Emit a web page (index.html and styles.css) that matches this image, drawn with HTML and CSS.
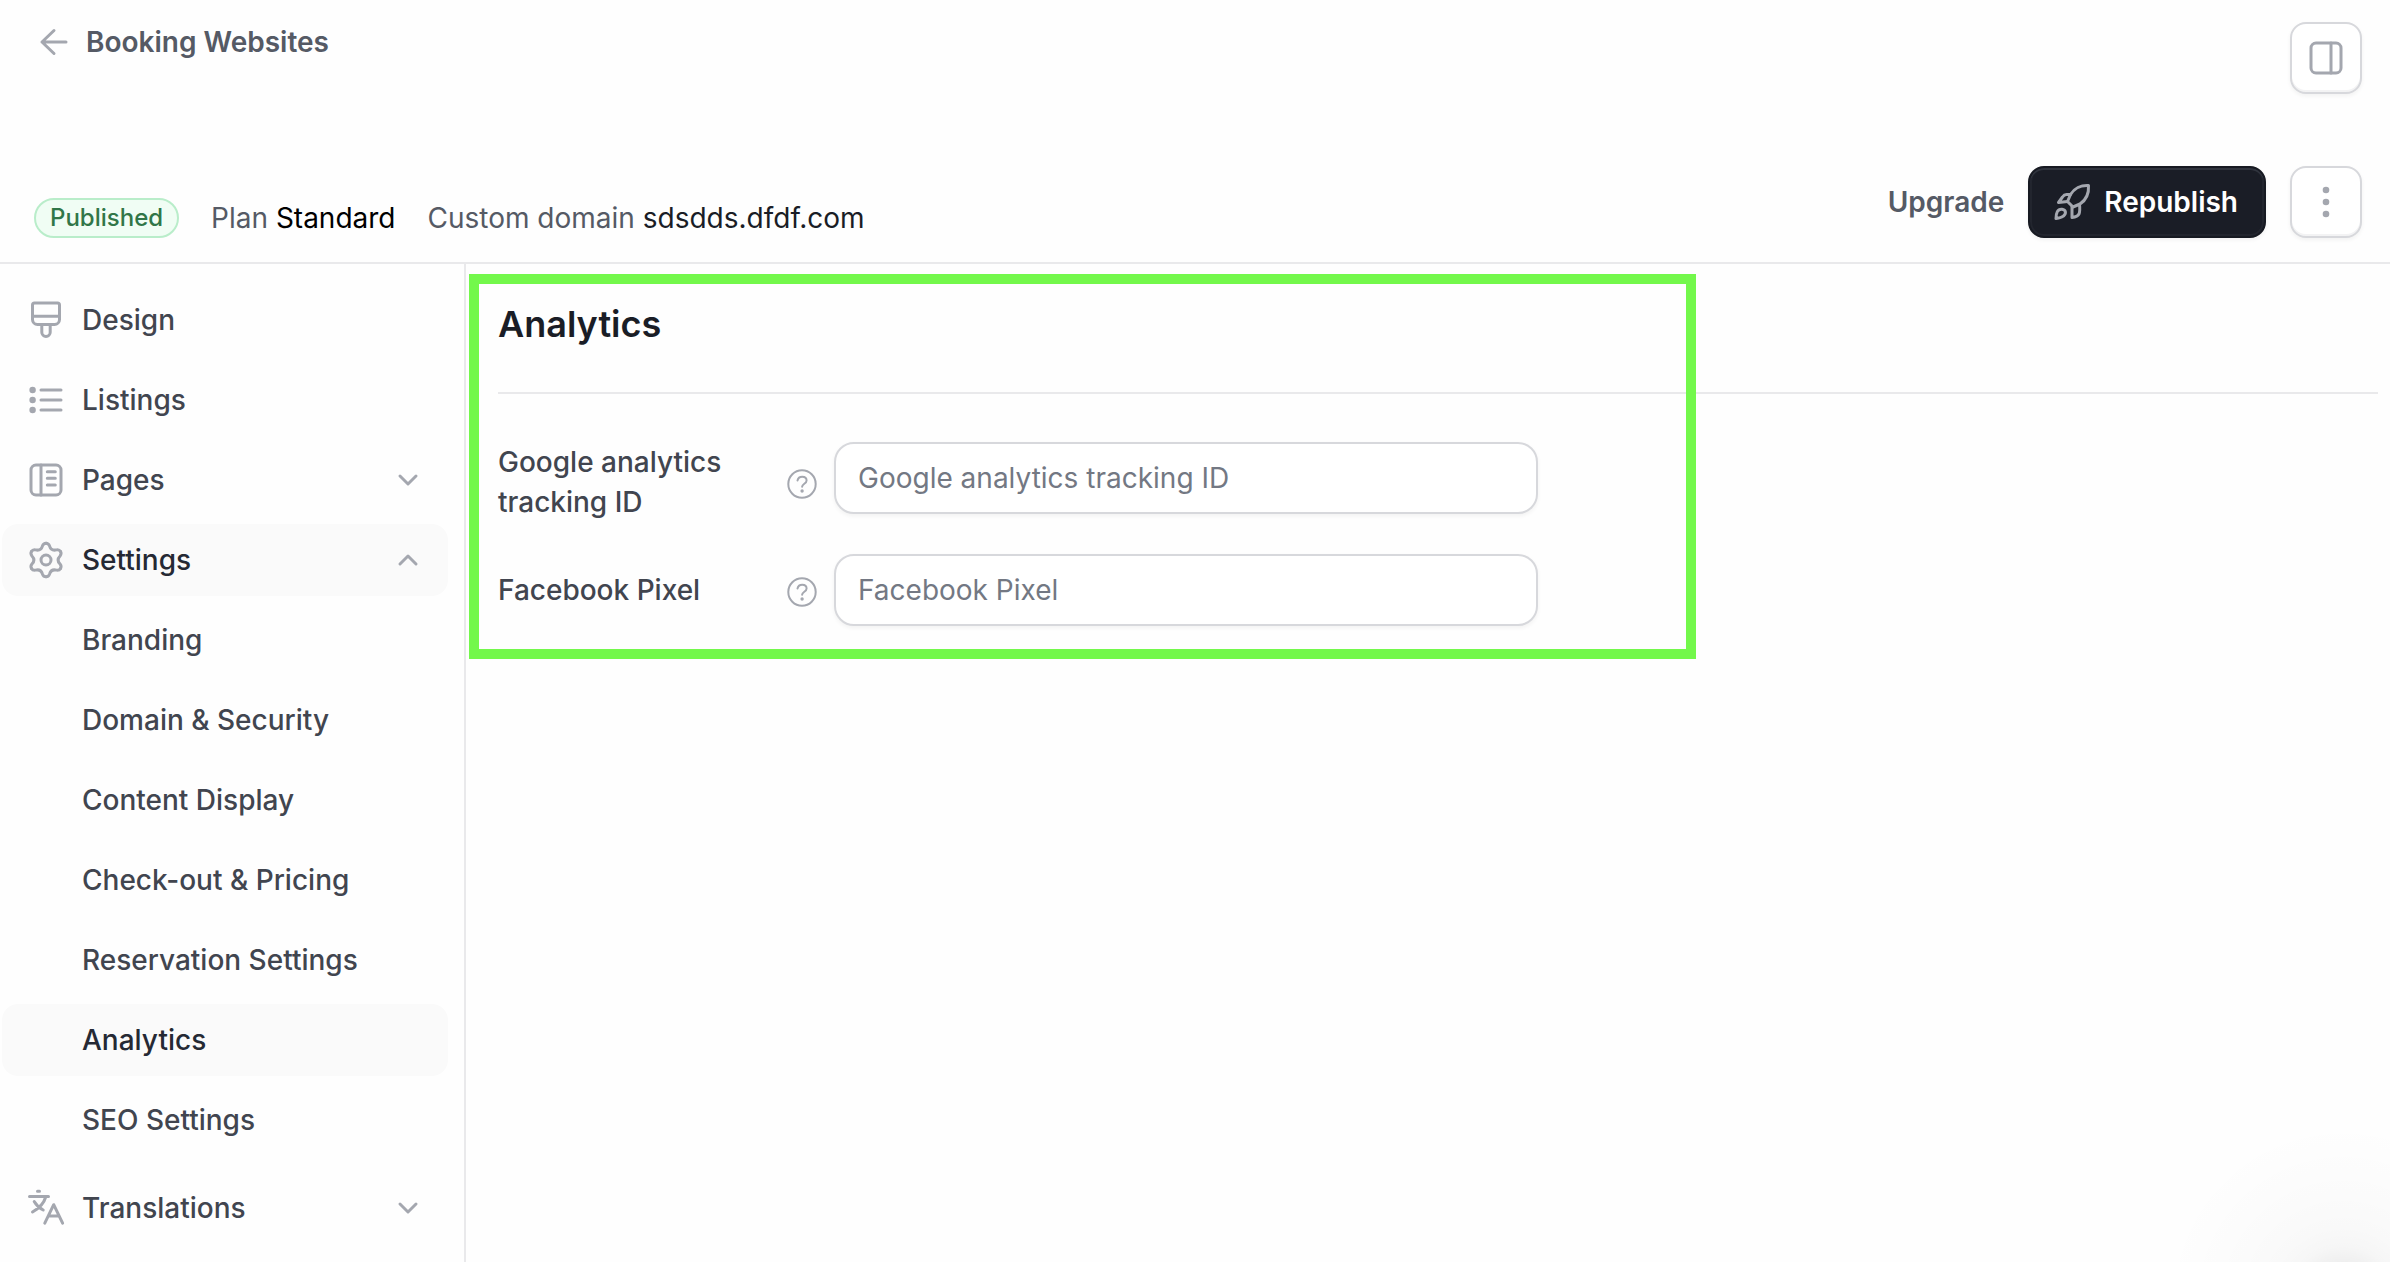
FILE: index.html
```html
<!DOCTYPE html>
<html lang="en">
<head>
<meta charset="utf-8">
<meta name="viewport" content="width=device-width, initial-scale=1">
<title>Analytics – Booking Websites</title>
<link rel="stylesheet" href="styles.css">
</head>
<body>
<header class="header">
  <div class="header-row">
    <a class="back" href="#">
      <svg class="icon-back" viewBox="0 0 32 32" aria-hidden="true"><path d="M28 16H4M16 4.500 4 16l12 11.500"/></svg>
      Booking Websites
    </a>
    <button class="icon-button" type="button" aria-label="Toggle panel">
      <svg class="icon" viewBox="0 0 40 40" aria-hidden="true"><rect x="5" y="5" width="30" height="30" rx="5"/><path d="M25 5v30"/></svg>
    </button>
  </div>
  <div class="header-row">
    <div class="status">
      <span class="badge">Published</span>
      <span>Plan <span class="plan">Standard</span></span>
      <span>Custom domain <span class="domain">sdsdds.dfdf.com</span></span>
    </div>
    <div class="actions">
      <button class="text-button" type="button">Upgrade</button>
      <button class="primary-button" type="button">
        <svg class="icon" viewBox="0 0 40 40" aria-hidden="true">
          <path d="M36.500 3.500C29 3 22 6.500 18.500 12.500L15.500 19.500 21 25l7-3C34 18 37 11 36.500 3.500Z"/>
          <path d="M18.500 12.500h-4c-2 0-3 1-4 2.500L6.500 20.500l9-1"/>
          <path d="M20 24.500V35.500c3.500-.5 6-1.500 7-3.500.8-2 1-5 .5-9.500"/>
          <path d="M4 36.500C4 31 5.500 26.800 10 27.200c4 .4 4.500 4.300 1.500 6.800-2 1.800-4.500 2.200-7.500 2.500Z"/>
        </svg>
        Republish
      </button>
      <button class="icon-button" type="button" aria-label="More actions">
        <svg class="icon" viewBox="0 0 40 40" aria-hidden="true"><g class="dots"><circle cx="20" cy="8" r="3.300"/><circle cx="20" cy="20" r="3.300"/><circle cx="20" cy="32" r="3.300"/></g></svg>
      </button>
    </div>
  </div>
</header>
<div class="layout">
  <nav class="sidebar" aria-label="Website">
    <a class="nav-item" href="#">
      <svg class="icon" viewBox="0 0 40 40" aria-hidden="true"><path d="M8.500 3h23a2 2 0 0 1 2 2v14.500a5 5 0 0 1-5 5h-17a5 5 0 0 1-5-5V5a2 2 0 0 1 2-2ZM6.500 16.300h27M15.800 24.500v7.800a4.200 4.200 0 0 0 8.400 0v-7.800"/></svg>
      <span class="nav-label">Design</span>
    </a>
    <a class="nav-item" href="#">
      <svg class="icon" viewBox="0 0 40 40" aria-hidden="true"><path d="M15 10h20M15 20h20M15 30h20"/><g class="dots"><circle cx="6.600" cy="10" r="3.200"/><circle cx="6.600" cy="20" r="3.200"/><circle cx="6.600" cy="30" r="3.200"/></g></svg>
      <span class="nav-label">Listings</span>
    </a>
    <button class="nav-item" type="button" aria-expanded="false">
      <svg class="icon" viewBox="0 0 40 40" aria-hidden="true"><rect x="5" y="5" width="30" height="30" rx="5"/><path d="M15 5v30M21.300 11.700h8M21.300 18.300h8M21.300 25h8"/></svg>
      <span class="nav-label">Pages</span>
      <svg class="chevron" viewBox="0 0 24 24" aria-hidden="true"><path d="m4 8 8 8 8-8"/></svg>
    </button>
    <button class="nav-item active" type="button" aria-expanded="true">
      <svg class="icon" viewBox="-20 -20 40 40" aria-hidden="true">
        <defs><path id="tooth" d="M0-16.800C2-16.800 2.900-15.800 3.500-14.200 4.500-10.800 7.100-9.300 10.540-10.130 12.230-10.410 13.550-10.130 14.550-8.400"/></defs>
        <use href="#tooth"/><use href="#tooth" transform="rotate(60)"/><use href="#tooth" transform="rotate(120)"/><use href="#tooth" transform="rotate(180)"/><use href="#tooth" transform="rotate(240)"/><use href="#tooth" transform="rotate(300)"/>
        <circle r="5"/>
      </svg>
      <span class="nav-label">Settings</span>
      <svg class="chevron" viewBox="0 0 24 24" aria-hidden="true"><path d="m4 16 8-8 8 8"/></svg>
    </button>
    <a class="nav-item sub" href="#">Branding</a>
    <a class="nav-item sub" href="#">Domain &amp; Security</a>
    <a class="nav-item sub" href="#">Content Display</a>
    <a class="nav-item sub" href="#">Check-out &amp; Pricing</a>
    <a class="nav-item sub" href="#">Reservation Settings</a>
    <a class="nav-item sub active" href="#" aria-current="page">Analytics</a>
    <a class="nav-item sub" href="#">SEO Settings</a>
    <button class="nav-item section-start" type="button" aria-expanded="false">
      <svg class="icon" viewBox="0 0 40 40" aria-hidden="true"><path d="M11.500 3.200h2M3.500 8.600h19M19.500 9.500C18 15 12.500 20.500 6.500 24M8.200 13.500c2 3.500 5 6.500 9 8.500M18.800 35.200 27.700 16.700 36.600 35.200M22.500 28h10.500"/></svg>
      <span class="nav-label">Translations</span>
      <svg class="chevron" viewBox="0 0 24 24" aria-hidden="true"><path d="m4 8 8 8 8-8"/></svg>
    </button>
  </nav>
  <main class="content">
    <h1 class="title">Analytics</h1>
    <form class="form">
      <div class="field">
        <label class="field-label" for="ga">Google analytics tracking ID</label>
        <button class="help" type="button" aria-label="About Google analytics tracking ID">
          <svg class="icon-help" viewBox="0 0 32 32" aria-hidden="true"><circle cx="16" cy="16" r="13.700"/><path d="M11.500 12.500c.6-2.500 2.300-3.700 4.700-3.700 2.500 0 4.400 1.500 4.400 3.700 0 3.200-4.500 3.200-4.500 6.300"/><circle class="dot" cx="16.100" cy="23" r="1.700"/></svg>
        </button>
        <input class="input" id="ga" type="text" placeholder="Google analytics tracking ID">
      </div>
      <div class="field">
        <label class="field-label" for="fb">Facebook Pixel</label>
        <button class="help" type="button" aria-label="About Facebook Pixel">
          <svg class="icon-help" viewBox="0 0 32 32" aria-hidden="true"><circle cx="16" cy="16" r="13.700"/><path d="M11.500 12.500c.6-2.500 2.300-3.700 4.700-3.700 2.500 0 4.400 1.500 4.400 3.700 0 3.200-4.500 3.200-4.500 6.300"/><circle class="dot" cx="16.100" cy="23" r="1.700"/></svg>
        </button>
        <input class="input" id="fb" type="text" placeholder="Facebook Pixel">
      </div>
    </form>
    <div class="highlight"></div>
  </main>
</div>
</body>
</html>
```
FILE: styles.css
```css
* {
  box-sizing: border-box;
}

body {
  margin: 0;
  min-height: 100vh;
  display: flex;
  flex-direction: column;
  font-family: Inter, "Liberation Sans", sans-serif;
  font-size: 28px;
  line-height: 40px;
  color: #555a65;
  background:
    radial-gradient(circle 180px at calc(100% - 47px) calc(100% + 40px),
      rgba(0, 0, 0, 0.1) 0, rgba(0, 0, 0, 0.06) 40px, rgba(0, 0, 0, 0.03) 56px,
      rgba(0, 0, 0, 0.02) 76px, rgba(0, 0, 0, 0.01) 110px, transparent 180px)
    #fefefe;
}

button,
input {
  font: inherit;
  color: inherit;
  margin: 0;
}

button {
  border: 0;
  padding: 0;
  background: none;
  text-align: left;
  cursor: pointer;
}

a {
  color: inherit;
  text-decoration: none;
}

svg {
  flex: none;
  fill: none;
  stroke: #a4a7af;
  stroke-width: 3;
  stroke-linecap: round;
  stroke-linejoin: round;
}

.icon {
  width: 40px;
  height: 40px;
}

.dots,
.dot {
  fill: #a4a7af;
  stroke: none;
}

.header {
  display: flex;
  flex-direction: column;
  gap: 72px;
  padding: 22px 28px 24px 34px;
  border-bottom: 2px solid #e9e9eb;
}

.header-row {
  display: flex;
  justify-content: space-between;
  align-items: flex-start;
}

.back {
  display: flex;
  align-items: center;
  gap: 16px;
  padding-left: 4px;
  font-weight: 600;
}

.icon-back {
  width: 32px;
  height: 32px;
}

.status {
  display: flex;
  align-items: center;
  align-self: flex-end;
  gap: 32px;
}

.badge {
  padding: 0 14px;
  border: 2px solid #b9edca;
  border-radius: 20px;
  background: #f0fdf4;
  color: #317648;
  font-size: 24px;
  line-height: 36px;
  font-weight: 500;
}

.plan {
  color: #000;
}

.domain {
  color: #1a1d26;
}

.actions {
  display: flex;
  align-items: center;
  gap: 24px;
}

.text-button {
  font-weight: 600;
}

.icon-button {
  display: flex;
  align-items: center;
  justify-content: center;
  width: 72px;
  height: 72px;
  border: 2px solid #d7d8dc;
  border-radius: 16px;
  background: #fff;
  box-shadow: 0 2px 4px rgba(0, 0, 0, 0.05), inset 0 -2px 0 #f3f3f4;
}

.primary-button {
  display: flex;
  align-items: center;
  gap: 12px;
  height: 72px;
  padding: 0 26px 0 22px;
  border: 2px solid #171a22;
  border-radius: 16px;
  background: #1a1d26;
  color: #fff;
  font-weight: 600;
  box-shadow: 0 2px 4px rgba(0, 0, 0, 0.05), inset 0 2px 0 #30343e, inset 0 0 0 2px #22252e;
}

.layout {
  flex: 1;
  display: grid;
  grid-template-columns: 466px 1fr;
}

.sidebar {
  display: flex;
  flex-direction: column;
  gap: 8px;
  padding: 20px 16px 16px 2px;
  border-right: 2px solid #e9e9eb;
}

.nav-item {
  display: flex;
  align-items: center;
  gap: 16px;
  height: 72px;
  padding: 0 28px 0 24px;
  border-radius: 16px;
  color: #41454f;
  font-weight: 500;
}

.nav-item.sub {
  padding-left: 80px;
}

.nav-item.active {
  background: #fafafa;
  color: #252934;
}

.nav-item.section-start {
  margin-top: 8px;
}

.nav-label {
  flex: 1;
}

.chevron {
  width: 24px;
  height: 24px;
}

.content {
  position: relative;
  padding: 36px 12px 36px 32px;
}

.title {
  margin: 0;
  padding-bottom: 44px;
  border-bottom: 2px solid #e9e9eb;
  color: #1a1d26;
  font-size: 36px;
  line-height: 48px;
  font-weight: 600;
}

.form {
  display: flex;
  flex-direction: column;
  gap: 32px;
  padding-top: 48px;
}

.field {
  display: grid;
  grid-template-columns: 272px 32px minmax(0, 704px);
  align-items: center;
  column-gap: 16px;
}

.field-label {
  padding-right: 16px;
  color: #41454f;
  font-weight: 500;
}

.help {
  display: flex;
  padding-top: 4px;
}

.icon-help {
  width: 32px;
  height: 32px;
  stroke-width: 2;
}

.input {
  align-self: start;
  width: 100%;
  height: 72px;
  padding: 0 22px;
  border: 2px solid #d7d8dc;
  border-radius: 20px;
  background: #fff;
  color: #1a1d26;
  box-shadow: 0 2px 4px rgba(0, 0, 0, 0.05);
}

.input::placeholder {
  color: #737883;
  opacity: 1;
}

.highlight {
  position: absolute;
  top: 10px;
  left: 3px;
  width: 1227px;
  height: 385px;
  border: 10px solid #73f84b;
  pointer-events: none;
}
```
